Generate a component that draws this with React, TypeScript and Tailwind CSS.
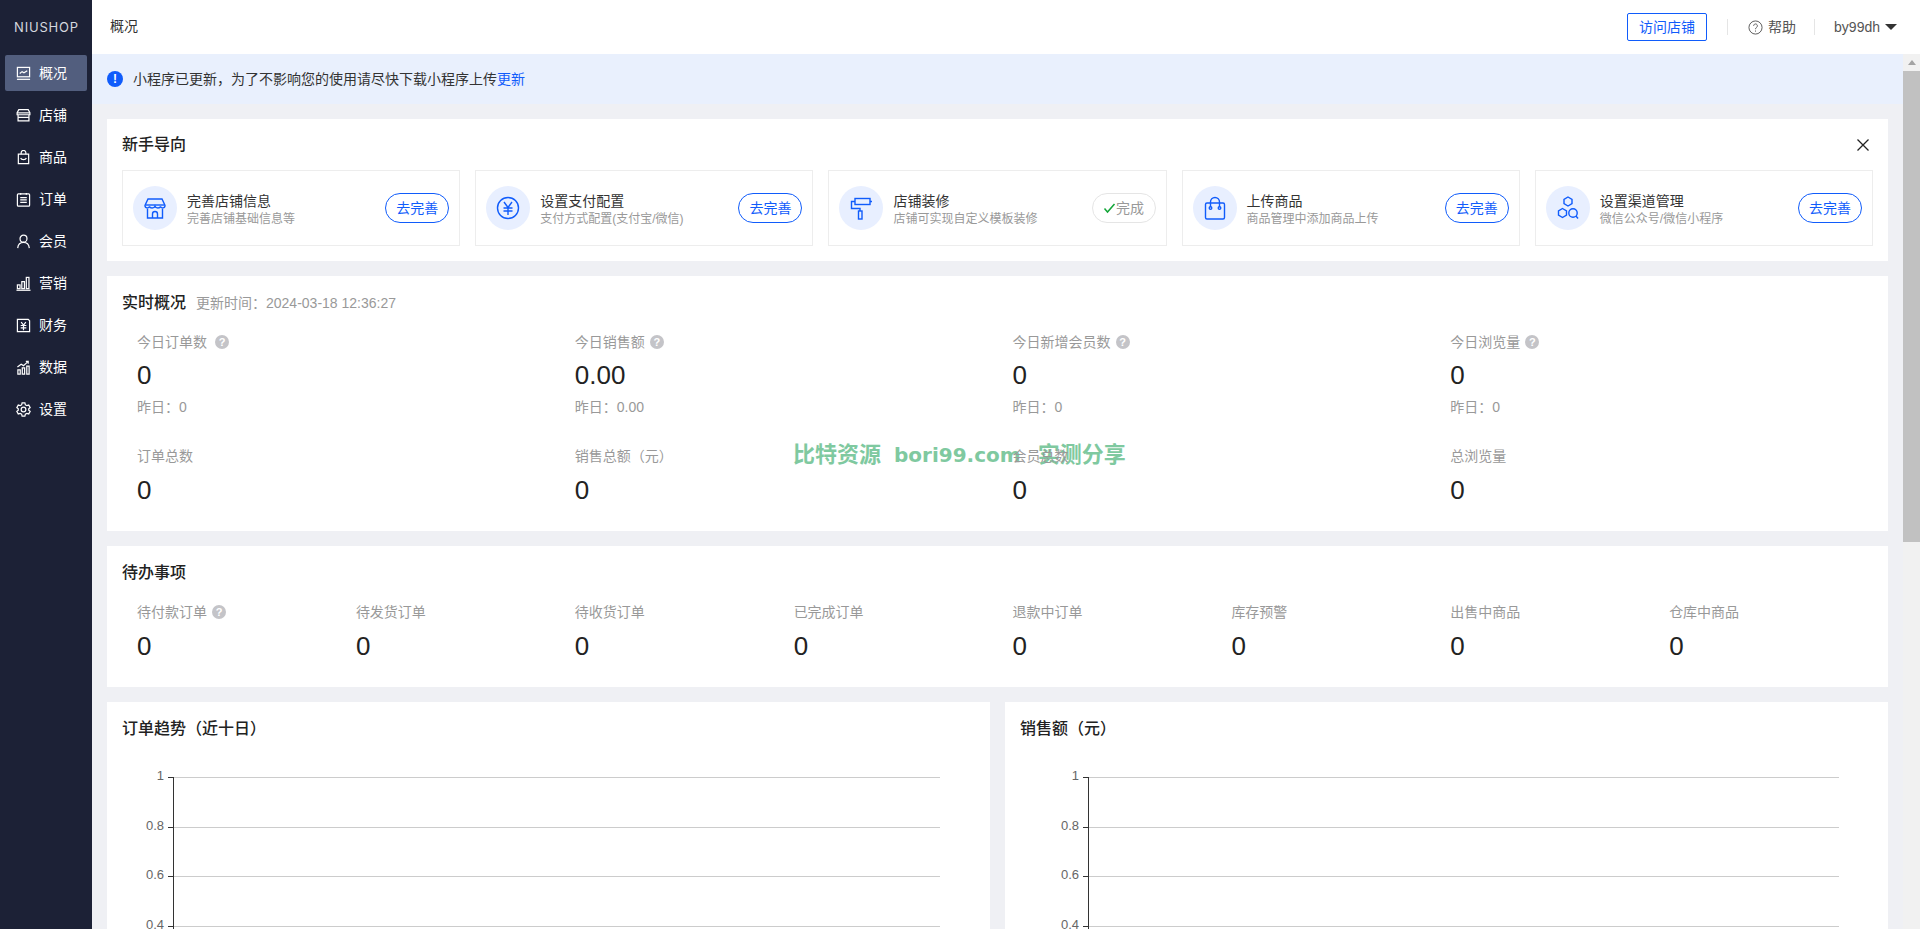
import type { ReactNode } from 'react'

const Icon = ({ children, size = 15 }: { children: ReactNode; size?: number }) => (
  <svg width={size} height={size} viewBox="0 0 16 16" fill="none" stroke="currentColor" strokeWidth="1.300" className="shrink-0">
    {children}
  </svg>
)

const navItems: { label: string; icon: ReactNode }[] = [
  {
    label: '概况',
    icon: (
      <>
        <rect x="1.500" y="1.500" width="13" height="10" />
        <path d="M4 8l2.500-2 2 1.200L12 5" />
        <path d="M1 14.200h14" />
      </>
    ),
  },
  {
    label: '店铺',
    icon: (
      <>
        <path d="M3 1.800h10l1.800 3.200v2.200H1.200V5z" />
        <path d="M2.200 7.200v6.600h11.600V7.200" />
        <path d="M1.200 5.200h13.600" />
        <path d="M2.200 10h11.600" />
      </>
    ),
  },
  {
    label: '商品',
    icon: (
      <>
        <path d="M2.500 4.500h11v10h-11z" />
        <path d="M5.500 4.500V3a2.500 2.500 0 0 1 5 0v1.500" />
        <path d="M5 8.500c.8 2.400 5.200 2.400 6 0" />
      </>
    ),
  },
  {
    label: '订单',
    icon: (
      <>
        <rect x="1.500" y="2" width="13" height="13" rx="1" />
        <path d="M5 1v2M11 1v2" />
        <path d="M4.500 6h7M4.500 8.500h7M4.500 11h7" />
      </>
    ),
  },
  {
    label: '会员',
    icon: (
      <>
        <circle cx="8" cy="5" r="3.700" />
        <path d="M1.800 15c.4-3.500 2.800-6 6.200-6s5.800 2.500 6.200 6" />
      </>
    ),
  },
  {
    label: '营销',
    icon: (
      <>
        <path d="M.5 15.200h15" />
        <rect x="1.500" y="9.500" width="2.800" height="4" />
        <rect x="6.200" y="6" width="2.800" height="7.500" />
        <rect x="11" y="1.500" width="2.800" height="12" />
      </>
    ),
  },
  {
    label: '财务',
    icon: (
      <>
        <path d="M1.500 1.500h11.500l1.500 1.500v11.500h-13z" />
        <path d="M5.500 4.500L8 7.500l2.500-3M5 8h6M5 10.500h6M8 7.500V13" />
      </>
    ),
  },
  {
    label: '数据',
    icon: (
      <>
        <path d="M2 15V10.500h2.500V15zM6.700 15V8.500h2.500V15zM11.500 15V6.500H14V15z" />
        <path d="M1.500 7.500l4-3 2.500 1.500 4.500-4" />
        <path d="M10.500 1.500h2.500V4" />
      </>
    ),
  },
  {
    label: '设置',
    icon: (
      <>
        <path d="M6.500 1h3l.5 2 1.600.9 2-.6 1.500 2.600-1.500 1.400v1.400l1.500 1.400-1.500 2.600-2-.6-1.600.9-.5 2h-3l-.5-2-1.600-.9-2 .6L.9 10.100l1.500-1.400V7.300L.9 5.900l1.500-2.600 2 .6L6 3z" />
        <circle cx="8" cy="8" r="2.500" />
      </>
    ),
  },
]

const guideIcons: Record<string, ReactNode> = {
  store: (
    <>
      <path d="M5 3h14l3 6.500c0 3-4 3-4.500.8-.5 2.200-4.700 2.200-5.500 0-.8 2.200-5 2.200-5.500 0C6 12.500 2 12.500 2 9.500z" />
      <path d="M2.500 9h19" />
      <path d="M4.500 12.500V22h15v-9.500" />
      <path d="M9.500 22v-4a2.500 2.500 0 0 1 5 0v4" />
    </>
  ),
  yuan: (
    <>
      <circle cx="12" cy="12" r="10.500" />
      <path d="M8 6l4 5.500L16 6M7.500 12h9M7.500 15h9M12 11.500V19" />
    </>
  ),
  roller: (
    <>
      <rect x="6" y="2.500" width="15" height="6" />
      <path d="M21 5.500h2" />
      <path d="M6 5.500H2.500V12.500H11V15" />
      <rect x="9.500" y="15" width="3.500" height="8" />
    </>
  ),
  bag: (
    <>
      <rect x="2.500" y="7" width="19" height="16" rx="1.500" />
      <path d="M7.500 11V6a4.500 4.500 0 0 1 9 0v5" />
      <circle cx="7.500" cy="12" r="1.300" />
      <circle cx="16.500" cy="12" r="1.300" />
    </>
  ),
  channel: (
    <>
      <path d="M12 1l4 2.300v4.400L12 10 8 7.700V3.300z" />
      <path d="M6.500 12.500l4 2.300v4.400l-4 2.300-4-2.300v-4.400z" />
      <circle cx="17" cy="17" r="4.200" />
      <path d="M20 20l2 2.500" />
    </>
  ),
}

const guides = [
  { icon: 'store', title: '完善店铺信息', desc: '完善店铺基础信息等', done: false },
  { icon: 'yuan', title: '设置支付配置', desc: '支付方式配置(支付宝/微信)', done: false },
  { icon: 'roller', title: '店铺装修', desc: '店铺可实现自定义模板装修', done: true },
  { icon: 'bag', title: '上传商品', desc: '商品管理中添加商品上传', done: false },
  { icon: 'channel', title: '设置渠道管理', desc: '微信公众号/微信小程序', done: false },
]

const todayStats = [
  { label: '今日订单数', value: '0', prev: '昨日：0', gap: 'gap-[8px]' },
  { label: '今日销售额', value: '0.00', prev: '昨日：0.00', gap: 'gap-[5px]' },
  { label: '今日新增会员数', value: '0', prev: '昨日：0', gap: 'gap-[5px]' },
  { label: '今日浏览量', value: '0', prev: '昨日：0', gap: 'gap-[5px]' },
]

const totalStats = [
  { label: '订单总数', value: '0' },
  { label: '销售总额（元）', value: '0' },
  { label: '会员总数', value: '0' },
  { label: '总浏览量', value: '0' },
]

const todos = ['待付款订单', '待发货订单', '待收货订单', '已完成订单', '退款中订单', '库存预警', '出售中商品', '仓库中商品']

const Hint = () => (
  <span className="flex h-[14px] w-[14px] items-center justify-center rounded-full bg-[#c4c4c8] text-[11px] font-bold leading-none text-white">?</span>
)

const Chart = ({ axis, right }: { axis: number; right: number }) => (
  <svg width="883" height="173" className="block">
    {[
      ['1', 21],
      ['0.8', 71],
      ['0.6', 120],
      ['0.4', 170],
    ].map(([label, y]) => (
      <g key={label}>
        <path d={`M${axis} ${Number(y) + 0.5}H${right}`} stroke="#cccccc" />
        <path d={`M${axis - 5} ${Number(y) + 0.5}H${axis}`} stroke="#333333" />
        <text x={axis - 9} y={Number(y) + 3} textAnchor="end" fontSize="13" fill="#666666">
          {label}
        </text>
      </g>
    ))}
    <path d={`M${axis + 0.5} 21V173`} stroke="#333333" />
  </svg>
)

export default function App() {
  return (
    <div className="relative flex h-[929px] w-[1920px] overflow-hidden bg-white font-['Liberation_Sans','Noto_Sans_CJK_SC',sans-serif] text-[14px] text-[#333333]">
      {/* Sidebar */}
      <aside className="w-[92px] shrink-0 bg-[#1c2136] text-white">
        <div className="flex h-[55px] items-center justify-center pl-[1px] pt-[1px] font-['Inter',sans-serif] text-[13px] tracking-[0.8px] text-[#d5d7de]">NIUSHOP</div>
        <nav className="flex flex-col gap-[6px] px-[5px]">
          {navItems.map((item, i) => (
            <div key={item.label} className={`flex h-[36px] items-center gap-[8px] rounded-[2px] pl-[11px] ${i === 0 ? 'bg-[#525e7e]' : ''}`}>
              <Icon>{item.icon}</Icon>
              <span>{item.label}</span>
            </div>
          ))}
        </nav>
      </aside>

      <div className="flex min-w-0 flex-1 flex-col">
        {/* Header */}
        <header className="flex h-[54px] shrink-0 items-center pl-[18px] pr-[23px]">
          <span className="flex-1 pb-[2px]">概况</span>
          <button className="h-[28px] w-[80px] rounded-[2px] border border-[#105cfb] text-[#105cfb]">访问店铺</button>
          <span className="ml-[20px] h-[16px] w-px bg-[#e5e5e5]" />
          <span className="ml-[20px] flex items-center gap-[5px] text-[#555555]">
            <svg width="15" height="15" viewBox="0 0 16 16" fill="none" stroke="currentColor" strokeWidth="1">
              <circle cx="8" cy="8" r="7" />
              <path d="M6 6.200a2 2 0 1 1 3.200 1.600C8.400 8.400 8 8.800 8 9.800" />
              <path d="M8 11.200v1.200" />
            </svg>
            帮助
          </span>
          <span className="ml-[18px] h-[16px] w-px bg-[#e5e5e5]" />
          <span className="ml-[19px] flex items-center gap-[5px] text-[#555555]">
            by99dh
            <span className="h-0 w-0 border-x-[6px] border-t-[6px] border-x-transparent border-t-[#333333]" />
          </span>
        </header>

        <div className="flex min-h-0 flex-1">
          <main className="min-w-0 flex-1 overflow-hidden bg-[#eff0f4]">
            {/* Notice */}
            <div className="flex h-[50px] items-center gap-[10px] bg-[#e9f0fd] pl-[15px]">
              <span className="flex h-[16px] w-[16px] items-center justify-center rounded-full bg-[#105cfb] text-[12px] font-bold text-white">!</span>
              <span className="pt-[1px]">
                小程序已更新，为了不影响您的使用请尽快下载小程序上传<span className="text-[#105cfb]">更新</span>
              </span>
            </div>

            <div className="flex flex-col gap-[15px] p-[15px]">
              {/* Guide */}
              <section className="bg-white px-[15px] pb-[15px]">
                <div className="flex h-[51px] items-center justify-between pr-[3px]">
                  <h2 className="text-[16px] font-medium text-[#222222]">新手导向</h2>
                  <svg width="14" height="14" viewBox="0 0 14 14" stroke="#222222" strokeWidth="1.300">
                    <path d="M1.500 1.500l11 11M12.500 1.500l-11 11" />
                  </svg>
                </div>
                <div className="grid grid-cols-5 gap-[15px]">
                  {guides.map((g) => (
                    <div key={g.title} className="flex h-[76px] items-center border border-[#ededed] px-[10px]">
                      <span className="flex h-[44px] w-[44px] shrink-0 items-center justify-center rounded-full bg-[#e8efff] text-[#105cfb]">
                        <svg width="24" height="24" viewBox="0 0 24 24" fill="none" stroke="currentColor" strokeWidth="1.400">
                          {guideIcons[g.icon]}
                        </svg>
                      </span>
                      <div className="ml-[10px] min-w-0 flex-1 pt-[2px]">
                        <p className="leading-[20px] text-[#333333]">{g.title}</p>
                        <p className="text-[12px] leading-[16px] text-[#999999]">{g.desc}</p>
                      </div>
                      {g.done ? (
                        <span className="flex h-[30px] w-[64px] shrink-0 items-center justify-center rounded-full border border-[#e5e5e5] text-[#999999]">
                          <svg width="13" height="11" viewBox="0 0 13 11" fill="none" stroke="#13a538" strokeWidth="1.500">
                            <path d="M1.500 5.500l3 3.500 7-8" />
                          </svg>
                          完成
                        </span>
                      ) : (
                        <span className="flex h-[30px] w-[64px] shrink-0 items-center justify-center rounded-full border border-[#105cfb] text-[#105cfb]">去完善</span>
                      )}
                    </div>
                  ))}
                </div>
              </section>

              {/* Realtime */}
              <section className="bg-white px-[15px] pb-[25px]">
                <div className="flex h-[54px] items-center gap-[10px]">
                  <h2 className="text-[16px] font-medium text-[#222222]">实时概况</h2>
                  <span className="text-[#999999]">更新时间：2024-03-18 12:36:27</span>
                </div>
                <div className="grid grid-cols-4 gap-y-[27px]">
                  {todayStats.map((s) => (
                    <div key={s.label} className="pl-[15px]">
                      <div className={`flex h-[24px] items-center text-[#999999] ${s.gap}`}>
                        {s.label}
                        <Hint />
                      </div>
                      <div className="mt-[5px] h-[32px] text-[26px] leading-[32px] text-[#222222]">{s.value}</div>
                      <div className="mt-[6px] h-[20px] leading-[20px] text-[#999999]">{s.prev}</div>
                    </div>
                  ))}
                  {totalStats.map((s) => (
                    <div key={s.label} className="pl-[15px]">
                      <div className="relative z-10 flex h-[24px] items-center text-[#999999]">{s.label}</div>
                      <div className="mt-[6px] h-[32px] text-[26px] leading-[32px] text-[#222222]">{s.value}</div>
                    </div>
                  ))}
                </div>
              </section>

              {/* Todo */}
              <section className="bg-white px-[15px] pb-[25px]">
                <div className="flex h-[54px] items-center">
                  <h2 className="text-[16px] font-medium text-[#222222]">待办事项</h2>
                </div>
                <div className="grid grid-cols-8">
                  {todos.map((t, i) => (
                    <div key={t} className="pl-[15px]">
                      <div className="flex h-[24px] items-center gap-[5px] text-[#999999]">
                        {t}
                        {i === 0 && <Hint />}
                      </div>
                      <div className="mt-[6px] h-[32px] text-[26px] leading-[32px] text-[#222222]">0</div>
                    </div>
                  ))}
                </div>
              </section>

              {/* Charts */}
              <div className="grid grid-cols-2 gap-[15px]">
                <section className="bg-white">
                  <h2 className="flex h-[54px] items-center pl-[15px] text-[16px] font-medium text-[#222222]">订单趋势（近十日）</h2>
                  <Chart axis={66} right={833} />
                </section>
                <section className="bg-white">
                  <h2 className="flex h-[54px] items-center pl-[15px] text-[16px] font-medium text-[#222222]">销售额（元）</h2>
                  <Chart axis={83} right={834} />
                </section>
              </div>
            </div>
          </main>

          {/* Scrollbar */}
          <div className="flex w-[17px] shrink-0 flex-col items-center bg-[#f1f1f1]">
            <span className="mt-[6px] h-0 w-0 border-x-[4px] border-b-[5px] border-x-transparent border-b-[#a3a3a3]" />
            <span className="mt-[6px] h-[471px] w-full bg-[#c1c1c1]" />
          </div>
        </div>
      </div>

      {/* Watermark */}
      <div className="absolute left-[793px] top-[441px] z-[5] flex items-baseline whitespace-nowrap text-[22px] font-bold leading-[28px] text-[#7fc9a0]">
        <span>比特资源</span>
        <span className="ml-[13px] font-['DejaVu_Sans',sans-serif] text-[20px]">bori99.com</span>
        <span className="ml-[17px]">实测分享</span>
      </div>
    </div>
  )
}
